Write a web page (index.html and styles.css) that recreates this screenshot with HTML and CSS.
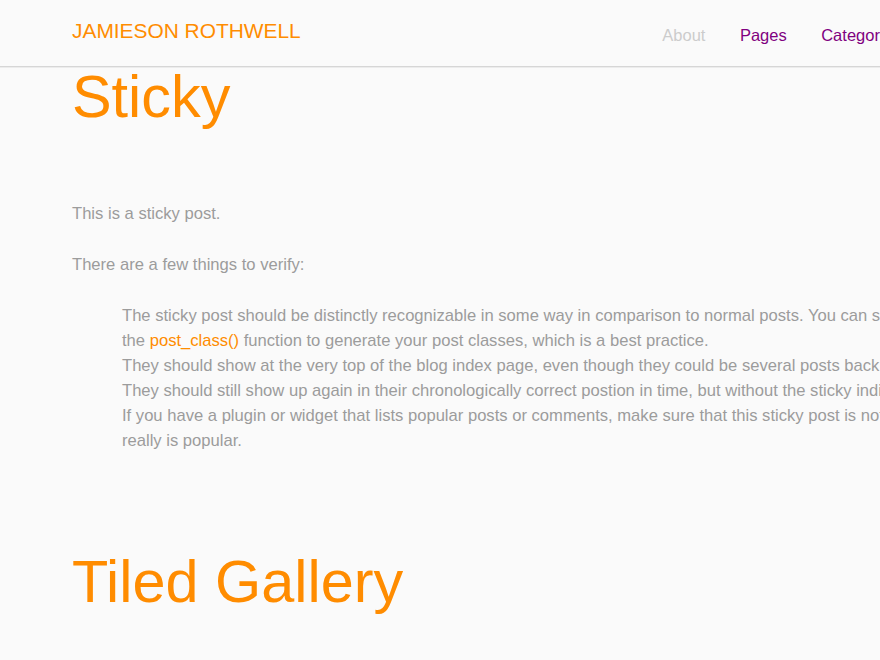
FILE: index.html
```html
<!DOCTYPE html>
<html>
<head>
<meta charset="utf-8">
<title>Jamieson Rothwell</title>
<link rel="stylesheet" href="styles.css">
</head>
<body>
<header class="site-header">
  <div class="header-inner">
    <a class="logo" href="#">JAMIESON ROTHWELL</a>
    <nav class="nav">
      <a class="nav-link current" href="#">About</a>
      <a class="nav-link" href="#">Pages</a>
      <a class="nav-link" href="#">Categories</a>
    </nav>
  </div>
</header>
<main class="content">
  <article class="post">
    <h1 class="post-title">Sticky</h1>
    <p class="text">This is a sticky post.</p>
    <p class="text">There are a few things to verify:</p>
    <ul class="checklist">
      <li>The sticky post should be distinctly recognizable in some way in comparison to normal posts. You can style the .sticky class if you are using<br>the <a class="inline-link" href="#">post_class()</a> function to generate your post classes, which is a best practice.</li>
      <li>They should show at the very top of the blog index page, even though they could be several posts back chronologically.</li>
      <li>They should still show up again in their chronologically correct postion in time, but without the sticky indicator.</li>
      <li>If you have a plugin or widget that lists popular posts or comments, make sure that this sticky post is not always at the top of those lists unless it<br>really is popular.</li>
    </ul>
  </article>
  <article class="post">
    <h1 class="post-title">Tiled Gallery</h1>
  </article>
</main>
</body>
</html>
```

FILE: styles.css
```css
html, body {
  margin: 0;
  padding: 0;
}
body {
  background: #fafafa;
  font-family: "Liberation Sans", Arial, Helvetica, sans-serif;
  color: #9c9c9c;
  overflow: hidden;
  width: 880px;
  height: 660px;
}
a {
  text-decoration: none;
}
.site-header {
  height: 66px;
  border-bottom: 1px solid #d6d6d6;
  box-shadow: 0 1px 0 #ececec;
  background: #fafafa;
}
.header-inner {
  width: 829px;
  padding: 21px 0 0 72px;
  display: flex;
  justify-content: space-between;
  align-items: flex-start;
  box-sizing: content-box;
}
.logo {
  color: #ff8c00;
  font-size: 20.9px;
  line-height: 1;
  white-space: nowrap;
}
.nav {
  display: flex;
  gap: 34.5px;
  margin-top: 6px;
  white-space: nowrap;
}
.nav-link {
  color: #800080;
  font-size: 16.5px;
  line-height: 1;
}
.nav-link.current {
  color: #ccc;
}
.content {
  padding: 0 0 0 72px;
  width: 1200px;
}
.post-title {
  margin: 0 0 74px;
  font-size: 59.4px;
  line-height: 60px;
  font-weight: normal;
  color: #ff8c00;
}
.text {
  margin: 0 0 26px;
  font-size: 16.6px;
  line-height: 25px;
}
.checklist {
  margin: 0 0 99px;
  padding: 0 0 0 50px;
  list-style: none;
  font-size: 16.6px;
  line-height: 25px;
  white-space: nowrap;
}
.inline-link {
  color: #ff8c00;
}
```
